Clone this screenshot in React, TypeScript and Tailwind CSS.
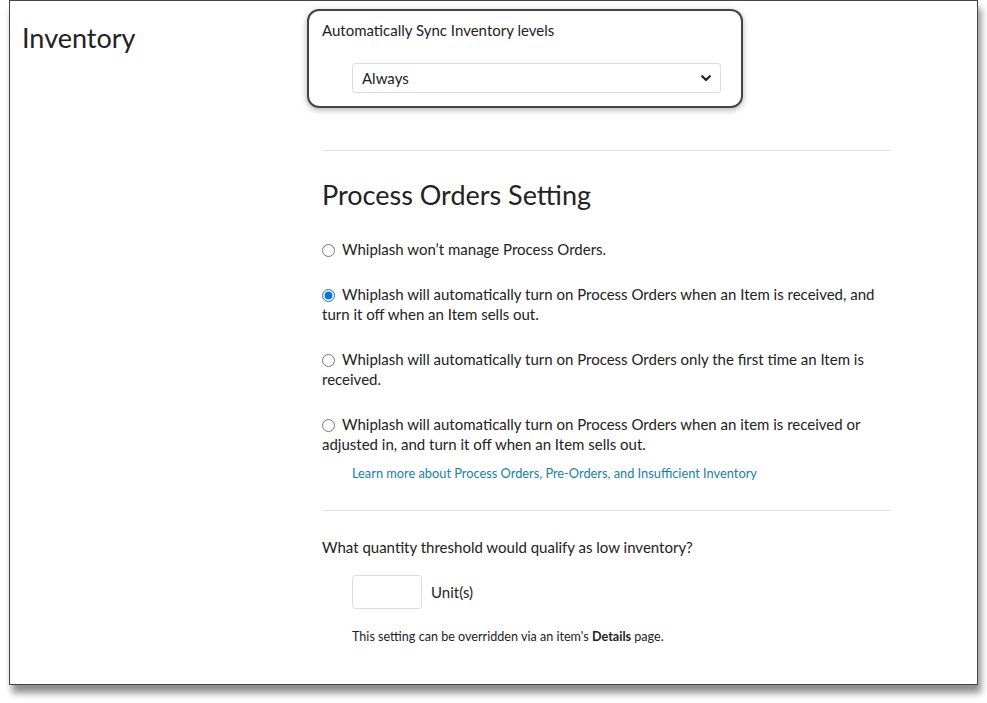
import React, { useState } from 'react';

const options = [
  "Whiplash won\u2019t manage Process Orders.",
  "Whiplash will automatically turn on Process Orders when an Item is received, and turn it off when an Item sells out.",
  "Whiplash will automatically turn on Process Orders only the first time an Item is received.",
  "Whiplash will automatically turn on Process Orders when an item is received or adjusted in, and turn it off when an Item sells out.",
];

export default function App() {
  const [selected, setSelected] = useState(1);

  return (
    <div className="min-h-screen bg-white font-['Lato','Liberation_Sans',sans-serif] text-[#222]">
      <div className="ml-[9px] w-[969px] h-[685px] border border-[#444] bg-white shadow-[3px_8px_7px_rgba(0,0,0,0.45)] flex">
        {/* left label column */}
        <div className="w-[300px] pl-[12px] pt-[19px]">
          <h1 className="text-[27px] leading-[36px] font-normal text-[#222]">Inventory</h1>
        </div>

        {/* settings column */}
        <div className="w-[581px] pl-[12px] pt-[8px]">
          <div className="-ml-[15px] w-[436px] border-2 border-[#444] rounded-[12px] pl-[13px] pr-[20px] pt-[9px] pb-[13px] shadow-[0_2px_6px_rgba(0,0,0,0.3)]">
            <label className="block text-[15px] leading-[20px]">Automatically Sync Inventory levels</label>
            <div className="relative mt-[23px] ml-[30px] w-[369px]">
              <select className="appearance-none w-full h-[30px] border border-[#ddd] rounded-[3px] bg-white pl-[9px] text-[15px] text-[#222] outline-none">
                <option>Always</option>
                <option>Never</option>
              </select>
              <svg className="absolute right-[10px] top-[12px] pointer-events-none" width="10" height="7" viewBox="0 0 10 7">
                <path d="M1.2 1.2 L5 5 L8.8 1.2" fill="none" stroke="#222" strokeWidth="2.2" strokeLinecap="round" strokeLinejoin="round" />
              </svg>
            </div>
          </div>

          <hr className="mt-[42px] border-0 border-t border-[#e5e5e5]" />

          <h2 className="mt-[28px] text-[27px] leading-[32px] font-normal">Process Orders Setting</h2>

          <div className="mt-[28px] flex flex-col gap-[25px]">
            {options.map((text, i) => (
              <label key={i} className="block text-[15px] leading-[20px] cursor-pointer">
                <input
                  type="radio"
                  name="process-orders"
                  checked={selected === i}
                  onChange={() => setSelected(i)}
                  className="align-[-2px] mr-[7px] ml-0 w-[13px] h-[13px] accent-[#0b74de]"
                />
                {text}
              </label>
            ))}
          </div>

          <a href="#" className="block mt-[10px] ml-[30px] text-[12.8px] leading-[18px] text-[#1581a8]">
            Learn more about Process Orders, Pre-Orders, and Insufficient Inventory
          </a>

          <hr className="mt-[28px] border-0 border-t border-[#e5e5e5]" />

          <p className="mt-[26px] text-[15px] leading-[20px]">What quantity threshold would qualify as low inventory?</p>

          <div className="mt-[18px] ml-[30px] flex items-center gap-[9px]">
            <input type="text" className="w-[70px] h-[34px] border border-[#ddd] rounded-[3px] outline-none px-2" />
            <span className="text-[15px] leading-[20px]">Unit(s)</span>
          </div>

          <p className="mt-[19px] ml-[30px] text-[12.6px] leading-[18px]">
            This setting can be overridden via an item's <b className="font-bold">Details</b> page.
          </p>
        </div>
      </div>
    </div>
  );
}
